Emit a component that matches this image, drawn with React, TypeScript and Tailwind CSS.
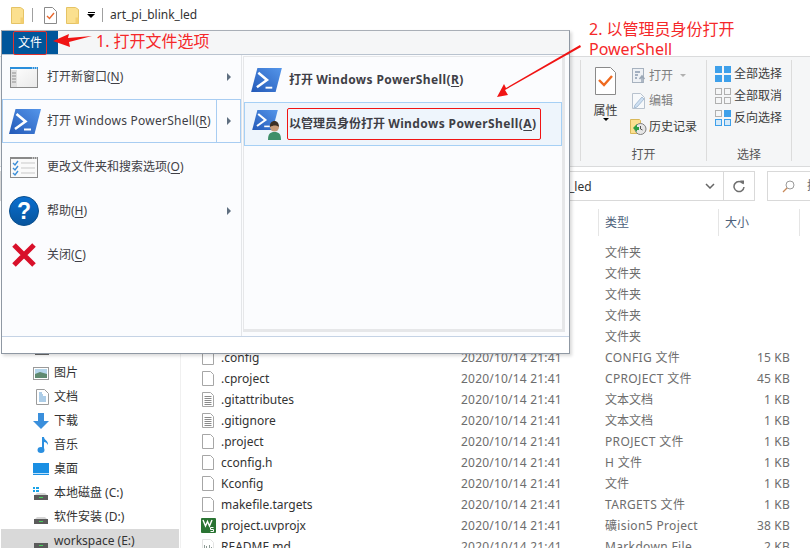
import type { ReactNode } from 'react';

const files = [
  { name: '', date: '', type: '文件夹', size: '' },
  { name: '', date: '', type: '文件夹', size: '' },
  { name: '', date: '', type: '文件夹', size: '' },
  { name: '', date: '', type: '文件夹', size: '' },
  { name: '', date: '', type: '文件夹', size: '' },
  { name: '.config', date: '2020/10/14 21:41', type: 'CONFIG 文件', size: '15 KB', icon: 'page' },
  { name: '.cproject', date: '2020/10/14 21:41', type: 'CPROJECT 文件', size: '45 KB', icon: 'page' },
  { name: '.gitattributes', date: '2020/10/14 21:41', type: '文本文档', size: '1 KB', icon: 'text' },
  { name: '.gitignore', date: '2020/10/14 21:41', type: '文本文档', size: '1 KB', icon: 'text' },
  { name: '.project', date: '2020/10/14 21:41', type: 'PROJECT 文件', size: '1 KB', icon: 'page' },
  { name: 'cconfig.h', date: '2020/10/14 21:41', type: 'H 文件', size: '1 KB', icon: 'page' },
  { name: 'Kconfig', date: '2020/10/14 21:41', type: '文件', size: '1 KB', icon: 'page' },
  { name: 'makefile.targets', date: '2020/10/14 21:41', type: 'TARGETS 文件', size: '1 KB', icon: 'page' },
  { name: 'project.uvprojx', date: '2020/10/14 21:41', type: '礦ision5 Project', size: '38 KB', icon: 'keil' },
  { name: 'README.md', date: '2020/10/14 21:41', type: 'Markdown File', size: '2 KB', icon: 'md' },
];

function FolderIcon() {
  return (
    <svg width="13" height="17" viewBox="0 0 13 17">
      <path d="M.5.5h9l3 2v14H.5z" fill="#fbe08f" stroke="#e5c365" />
      <path d="M9.5 10.5h3v6h-3z" fill="#f3cf70" />
    </svg>
  );
}

function PageIcon({ lines }: { lines?: boolean }) {
  return (
    <svg width="12" height="15" viewBox="0 0 12 15">
      <path d="M.5.5h8l3 3v11H.5z" fill="#fff" stroke="#a6a6a6" />
      {lines && <path d="M2.500 4.500h7M2.500 6.500h7M2.500 8.500h7M2.500 10.500h7M2.500 12.500h7" stroke="#8a8a8a" />}
    </svg>
  );
}

function KeilIcon() {
  return (
    <svg width="15" height="15" viewBox="0 0 15 15">
      <rect width="15" height="15" rx="1" fill="#2a7433" />
      <path d="M2 2l2.500 6 2-4.500L8.500 8 11 2" fill="none" stroke="#fff" strokeWidth="1.400" />
      <path d="M12.500 9.500h-3v2h3v2h-3" fill="none" stroke="#fff" />
    </svg>
  );
}

function FileIcon({ kind }: { kind?: string }) {
  if (kind === 'keil') return <KeilIcon />;
  if (kind === 'text') return <PageIcon lines />;
  if (kind === 'md') {
    return (
      <svg width="12" height="15" viewBox="0 0 12 15">
        <path d="M.5.500h8l3 3v11H.5z" fill="#fff" stroke="#e4e4e4" />
        <path d="M2 6h1v4H2zM4 7h1v3H4zM7 6h1v4H7zM9 8h1v2H9z" fill="#8d9a94" />
      </svg>
    );
  }
  return <PageIcon />;
}

function PowerShellIcon({ w = 32, h = 25, id }: { w?: number; h?: number; id: string }) {
  return (
    <svg width={w} height={h} viewBox="0 0 32 25">
      <defs>
        <linearGradient id={id} x1="0" y1="1" x2="1" y2="0">
          <stop offset="0" stopColor="#2359b8" />
          <stop offset="1" stopColor="#5596ea" />
        </linearGradient>
      </defs>
      <path d="M6.500 0H32l-6.500 25H0z" fill={`url(#${id})`} />
      <path d="M7.500 5l9 7.500L6 20" fill="none" stroke="#fff" strokeWidth="2.600" />
      <path d="M15 20.500h7" stroke="#fff" strokeWidth="2" />
    </svg>
  );
}

function WindowIcon() {
  return (
    <svg width="28" height="21" viewBox="0 0 28 21">
      <defs>
        <linearGradient id="win-bg" x1="0" y1="0" x2="1" y2="1">
          <stop offset="0" stopColor="#ffffff" />
          <stop offset="1" stopColor="#e9e9e9" />
        </linearGradient>
      </defs>
      <rect x=".5" y=".5" width="27" height="20" fill="url(#win-bg)" stroke="#8a8a8a" />
      <rect x="0" y="0" width="28" height="2" fill="#2a8fdc" />
      <path d="M22 1h1M24 1h1M26 1h1" stroke="#fff" />
      <rect x="1" y="3" width="6" height="17" fill="#e1e1e1" />
      <path d="M2 6h4M2 9h4M2 12h4M2 15h4" stroke="#8f8f8f" />
    </svg>
  );
}

function OptionsIcon() {
  return (
    <svg width="28" height="21" viewBox="0 0 28 21">
      <rect x=".5" y=".5" width="27" height="20" fill="#fafafa" stroke="#8a8a8a" />
      <rect x="0" y="0" width="28" height="2" fill="#8a8a8a" />
      <path d="M22 1h1M24 1h1M26 1h1" stroke="#fff" />
      <path d="M11 6h14M11 11h14M11 16h14" stroke="#c9c9c9" />
      <path d="M3 6l2 2 3-4M3 11l2 2 3-4M3 16l2 2 3-4" fill="none" stroke="#3d8fd8" strokeWidth="1.400" />
    </svg>
  );
}

function HelpIcon() {
  return (
    <svg width="30" height="30" viewBox="0 0 30 30">
      <defs>
        <linearGradient id="help-bg" x1="0" y1="0" x2="0" y2="1">
          <stop offset="0" stopColor="#0a6fd0" />
          <stop offset="1" stopColor="#07549c" />
        </linearGradient>
      </defs>
      <circle cx="15" cy="15" r="14.500" fill="url(#help-bg)" stroke="#0a4f8e" />
      <text x="15" y="23" textAnchor="middle" fontSize="23" fontWeight="700" fill="#fff" fontFamily="Liberation Sans, sans-serif">?</text>
    </svg>
  );
}

function CloseIcon() {
  return (
    <svg width="26" height="26" viewBox="0 0 26 26">
      <path d="M3 3l20 20M23 3L3 23" stroke="#d8102a" strokeWidth="5" />
    </svg>
  );
}

function Caret() {
  return <div className="h-0 w-0 border-y-[4px] border-l-[4px] border-y-transparent border-l-[#5f6f80]" />;
}

function Key({ children }: { children: ReactNode }) {
  return <span className="underline underline-offset-2">{children}</span>;
}

function MenuRow({ icon, label, arrow }: { icon: ReactNode; label: ReactNode; arrow?: boolean }) {
  return (
    <div className="flex h-[44px] items-center">
      <div className="flex w-[45px] shrink-0 justify-center pr-[1px]">{icon}</div>
      <div className="flex-1 text-[12px] text-[#3f3f46]">{label}</div>
      {arrow && <div className="mr-[10px]"><Caret /></div>}
    </div>
  );
}

function FileMenu() {
  return (
    <div className="absolute left-[1px] top-[30px] flex h-[324px] w-[569px] flex-col border border-[#8f98a3] border-t-[#a9afb7] bg-white shadow-[2px_2px_3px_rgba(0,0,0,0.15)]">
      <div className="flex h-[24px] shrink-0 border-b border-[#b9c3cf] bg-[#f5f6f7]">
        <div className="flex h-full w-[56px] items-center pl-[11px] bg-[#00569b] text-[12px] text-white">
          <span className="rounded-[2px] border border-[#e0322f] px-[4px] py-[2px]">文件</span>
        </div>
      </div>
      <div className="flex flex-1 border-b border-[#c5d3e5] bg-[#fbfcfe]">
        <div className="w-[240px] shrink-0 border-r border-[#e4e6e9]">
          <MenuRow icon={<WindowIcon />} arrow label={<>打开新窗口(<Key>N</Key>)</>} />
          <div className="flex h-[44px] items-center border border-[#a8cdf2]">
            <div className="flex w-[44px] shrink-0 justify-center"><PowerShellIcon id="ps-a" /></div>
            <div className="flex-1 text-[12px] text-[#3f3f46]">
              打开 <span className="tracking-[0.25px]">Windows PowerShell(<Key>R</Key>)</span>
            </div>
            <div className="flex h-full w-[24px] items-center justify-center border-l border-[#a8cdf2]"><Caret /></div>
          </div>
          <div className="h-[2px]" />
          <MenuRow icon={<OptionsIcon />} label={<>更改文件夹和搜索选项(<Key>O</Key>)</>} />
          <MenuRow icon={<HelpIcon />} arrow label={<>帮助(<Key>H</Key>)</>} />
          <MenuRow icon={<CloseIcon />} label={<>关闭(<Key>C</Key>)</>} />
        </div>
        <div className="mb-[4px] ml-[1px] mr-[4px] mt-[1px] flex-1 border-b-[3px] border-l border-r-[3px] border-t border-[#e6e7e9] pt-[1px]">
          <div className="flex h-[44px] items-center">
            <div className="ml-[7px] w-[38px]"><PowerShellIcon id="ps-b" w={31} h={24} /></div>
            <div className="text-[12px] font-bold text-[#3f3f46]">
              打开 <span className="tracking-[0.38px]">Windows PowerShell(<Key>R</Key>)</span>
            </div>
          </div>
          <div className="flex h-[44px] items-center border border-[#a6d0f5] bg-[#eef5fc]">
            <div className="relative mb-[8px] ml-[7px] h-[20px] w-[35px]">
              <PowerShellIcon id="ps-c" w={26} h={20} />
              <svg className="absolute left-[15px] top-[10px]" width="15" height="20" viewBox="0 0 15 20">
                <path d="M1 20c0-6 2-8 6.500-8S14 14 14 20z" fill="#3f8f69" />
                <circle cx="7.500" cy="7" r="4.500" fill="#c79a78" />
                <path d="M3 7c-.5-4 2-6 4.500-6S12 3 12 7c-2-2-6-2-9 0z" fill="#3c2e24" />
              </svg>
            </div>
            <div className="rounded-[2px] border border-[#f01414] py-[6px] pl-[1px] pr-[4px] text-[12px] font-bold text-[#3f3f46]">
              以管理员身份打开 <span className="tracking-[0.4px]">Windows PowerShell(<Key>A</Key>)</span>
            </div>
          </div>
        </div>
      </div>
      <div className="h-[16px] shrink-0" />
    </div>
  );
}

function Annotations() {
  return (
    <>
      <svg className="absolute left-0 top-0" width="810" height="110" viewBox="0 0 810 110">
        <path d="M53 41l16-7-1 4 24-2-23 6 1 5z" fill="#f01414" />
        <path d="M581 47L505 90l3 5-11 2 7-13 2 4 74-43z" fill="#f01414" />
      </svg>
      <div className="absolute left-[96px] top-[30px] text-[16px] leading-[22px] text-[#f5282a]">1. 打开文件选项</div>
      <div className="absolute left-[589px] top-[19px] text-[16px] leading-[20px] text-[#f5282a]">
        <div>2. 以管理员身份打开</div>
        <div>PowerShell</div>
      </div>
    </>
  );
}

function SmallBtn({ icon, label, dim }: { icon: ReactNode; label: ReactNode; dim?: boolean }) {
  return (
    <div className={`flex h-[25px] items-center gap-[2px] text-[12px] ${dim ? 'text-[#7f7f7f]' : 'text-[#3c3c3c]'}`}>
      <div className="flex w-[17px] justify-center">{icon}</div>
      {label}
    </div>
  );
}

function Grid4({ cells }: { cells: string[] }) {
  return (
    <div className="grid grid-cols-2 gap-[2px]">
      {cells.map((c, i) => (
        <div key={i} className={`h-[7px] w-[7px] ${c}`} />
      ))}
    </div>
  );
}

function Ribbon() {
  const filled = 'bg-[#3ea0ea]';
  const empty = 'border border-[#b0b0b0]';
  const light = 'border border-[#3ea0ea] bg-[#d4e9f9]';
  return (
    <div className="flex h-[111px] shrink-0 border-y border-[#dadbdc] bg-[#f5f6f7]">
      <div className="w-[580px] shrink-0" />
      <div className="my-[3px] flex h-[101px] w-[127px] shrink-0 flex-col border-x border-[#dcdcdc]">
        <div className="flex flex-1">
          <div className="flex w-[49px] flex-col items-center pt-[7px] text-[12px] text-[#3c3c3c]">
            <svg width="21" height="28" viewBox="0 0 21 28">
              <path d="M.5.5h15l5 5v22H.5z" fill="#fff" stroke="#8a8a8a" />
              <path d="M4 13l5 5 8-9" fill="none" stroke="#ef6a1f" strokeWidth="2.400" />
            </svg>
            <div className="mt-[8px] leading-[15px]">属性</div>
            <div className="h-0 w-0 border-x-[3px] border-t-[3px] border-x-transparent border-t-black" />
          </div>
          <div className="flex flex-col pt-[3px]">
            <SmallBtn
              dim
              label={
                <>
                  打开
                  <span className="ml-[5px] h-0 w-0 border-x-[3px] border-t-[3px] border-x-transparent border-t-[#b0b0b0]" />
                </>
              }
              icon={
                <svg width="14" height="15" viewBox="0 0 14 15">
                  <rect x=".5" y=".5" width="11" height="14" fill="#eef1f5" stroke="#a7b2bf" />
                  <path d="M3 4h5M3 7h3M3 10h2" stroke="#8b9bb0" strokeWidth="1.500" />
                  <path d="M10 15V9M7.500 11l2.500-3 2.500 3" fill="none" stroke="#9aa7b6" strokeWidth="1.500" />
                </svg>
              }
            />
            <SmallBtn
              dim
              label="编辑"
              icon={
                <svg width="14" height="16" viewBox="0 0 14 16">
                  <path d="M.5.500h8l4 4v11H.5z" fill="#f7f9fb" stroke="#b8c2ce" />
                  <path d="M3 12l7-8 2 2-7 8-3 1z" fill="#cfe0f2" stroke="#a9bfd6" />
                </svg>
              }
            />
            <div className="pt-[1px]">
              <SmallBtn
                label="历史记录"
                icon={
                  <svg width="17" height="16" viewBox="0 0 17 16">
                    <path d="M.5.500h9l1 1v13H.5z" fill="#fbe08f" stroke="#d9b85a" />
                    <circle cx="10.500" cy="10" r="5.500" fill="#e6e6e6" stroke="#7f7f7f" />
                    <path d="M10.500 7v3l2 1" fill="none" stroke="#555" />
                    <path d="M3 9l4-4v3h2v3H7v2z" fill="#2f9e44" />
                  </svg>
                }
              />
            </div>
          </div>
        </div>
        <div className="-mb-[2px] text-center text-[12px] leading-[16px] text-[#555]">打开</div>
      </div>
      <div className="my-[3px] flex h-[101px] w-[85px] shrink-0 flex-col border-r border-[#dcdcdc]">
        <div className="flex flex-1 flex-col pl-[8px] pt-[3px]">
          <div className="flex h-[22px] items-center gap-[3px] text-[12px] text-[#3c3c3c]">
            <Grid4 cells={[filled, filled, filled, filled]} />
            全部选择
          </div>
          <div className="flex h-[22px] items-center gap-[3px] text-[12px] text-[#3c3c3c]">
            <Grid4 cells={[empty, empty, empty, empty]} />
            全部取消
          </div>
          <div className="flex h-[22px] items-center gap-[3px] text-[12px] text-[#3c3c3c]">
            <Grid4 cells={[empty, filled, light, light]} />
            反向选择
          </div>
        </div>
        <div className="-mb-[2px] text-center text-[12px] leading-[16px] text-[#555]">选择</div>
      </div>
    </div>
  );
}

function AddressBar() {
  return (
    <div className="flex h-[38px] shrink-0 items-center">
      <div className="flex h-[30px] w-[755px] shrink-0 items-center border border-[#d9d9d9] pl-[568px] text-[12px] text-[#333]">
        <span className="flex-1 pt-[1px]">_led</span>
        <svg className="mr-[8px]" width="10" height="6" viewBox="0 0 10 6">
          <path d="M1 1l4 4 4-4" fill="none" stroke="#666" strokeWidth="1.500" />
        </svg>
        <div className="flex h-full w-[31px] items-center justify-center border-l border-[#d9d9d9]">
          <svg width="12" height="13" viewBox="0 0 12 13">
            <path d="M10 3.500A5 5 0 1 0 11 7" fill="none" stroke="#6f6f6f" strokeWidth="1.500" />
            <path d="M7 .5h4v4z" fill="#6f6f6f" />
          </svg>
        </div>
      </div>
      <div className="ml-[12px] flex h-[30px] min-w-0 flex-1 items-center overflow-hidden whitespace-nowrap border-y border-l border-[#d9d9d9] pl-[14px] text-[12px] text-[#6d6d6d]">
        <svg className="mr-[12px] shrink-0" width="13" height="13" viewBox="0 0 13 13">
          <circle cx="8" cy="5" r="4" fill="none" stroke="#9a9a9a" />
          <path d="M5 8l-4 4" stroke="#c98a5a" strokeWidth="1.300" />
        </svg>
        搜索
      </div>
    </div>
  );
}

function NavItem({ icon, label, active }: { icon: ReactNode; label: string; active?: boolean }) {
  return (
    <div className={`flex h-[24px] shrink-0 items-center ${active ? 'bg-[#d9d9d9]' : ''}`}>
      <div className="flex w-[53px] shrink-0 justify-end pr-[5px]">{icon}</div>
      <span className="text-[12px] text-[#333]">{label}</span>
    </div>
  );
}

function DriveIcon({ win }: { win?: boolean }) {
  return (
    <svg className="mt-[1px]" width="16" height="14" viewBox="0 0 16 14">
      {win && <path d="M0 0h2v2H0zM3 0h3v2H3zM0 3h2v2H0zM3 3h3v2H3z" fill="#1aa3e8" />}
      <path d="M2 8l2-2h8l2 2z" fill="#d6d6d6" />
      <rect x="1" y="8" width="14" height="5" fill="#5b5b5b" />
      <rect x="6" y="10" width="4" height="1" fill="#45d05a" />
    </svg>
  );
}

function Sidebar() {
  return (
    <div className="flex w-[181px] shrink-0 flex-col overflow-hidden border-r border-[#f0f0f0] pl-[1px] pr-[1px] pt-[132px]">
      <NavItem
        label="视频"
        icon={
          <svg width="14" height="11" viewBox="0 0 14 11">
            <rect width="14" height="11" fill="#d8d8d8" />
            <rect y="8" width="14" height="3" fill="#6a6a6a" />
            <path d="M2 9h1M5 9h1M8 9h1M11 9h1" stroke="#e8b83a" />
          </svg>
        }
      />
      <NavItem
        label="图片"
        icon={
          <svg width="16" height="13" viewBox="0 0 16 13">
            <rect x=".5" y=".5" width="15" height="12" fill="#fff" stroke="#9a9a9a" />
            <rect x="2" y="2" width="12" height="5" fill="#b4d5ea" />
            <path d="M2 7l5-2 7 2v4H2z" fill="#5f8a70" />
          </svg>
        }
      />
      <NavItem
        label="文档"
        icon={
          <svg width="13" height="16" viewBox="0 0 13 16">
            <path d="M.5.500h8l4 4v11H.5z" fill="#fff" stroke="#9c9c9c" />
            <path d="M3 4h3M3 6h4M3 8h7M3 10h7M3 12h7" stroke="#5a9bd0" />
          </svg>
        }
      />
      <NavItem
        label="下载"
        icon={
          <svg width="16" height="16" viewBox="0 0 16 16">
            <path d="M5 0h6v8h5l-8 8-8-8h5z" fill="#3a8fdc" />
          </svg>
        }
      />
      <NavItem
        label="音乐"
        icon={
          <svg width="12" height="16" viewBox="0 0 12 16">
            <ellipse cx="4" cy="13" rx="3.500" ry="3" fill="#2a8fe0" />
            <path d="M5 0h2c0 3 4.500 3.500 4 8-1-2-2.500-3-4-3v8H5z" fill="#2a8fe0" />
          </svg>
        }
      />
      <NavItem
        label="桌面"
        icon={
          <svg width="16" height="12" viewBox="0 0 16 12">
            <rect width="16" height="12" fill="#1a8fe3" />
            <rect y="10" width="16" height="1" fill="#bfe2fa" />
          </svg>
        }
      />
      <NavItem label="本地磁盘 (C:)" icon={<DriveIcon win />} />
      <NavItem label="软件安装 (D:)" icon={<DriveIcon />} />
      <NavItem label="workspace (E:)" icon={<DriveIcon />} active />
    </div>
  );
}

function FileList() {
  return (
    <div className="min-w-0 flex-1 overflow-hidden">
      <div className="flex h-[37px] pb-[6px] pt-[4px] text-[12px] text-[#4c607a]">
        <div className="w-[418px] shrink-0 border-r border-[#e5e5e5]" />
        <div className="flex w-[120px] shrink-0 items-center border-r border-[#e5e5e5] pl-[6px]">类型</div>
        <div className="flex w-[81px] shrink-0 items-center border-r border-[#e5e5e5] pl-[6px]">大小</div>
      </div>
      {files.map((f, i) => (
        <div key={i} className="flex h-[21px] items-center text-[12px] text-[#6d6d6d]">
          <div className="w-[18px] shrink-0" />
          <div className="flex w-[18px] shrink-0 justify-center">{f.name && <FileIcon kind={f.icon} />}</div>
          <div className="w-[244px] shrink-0 pl-[4px] text-[#333]">{f.name}</div>
          <div className="w-[144px] shrink-0 tracking-[0.2px]">{f.date}</div>
          <div className={`w-[120px] shrink-0 ${/[A-Z]/.test(f.type) ? 'tracking-[0.35px]' : ''}`}>{f.type}</div>
          <div className="w-[65px] shrink-0 text-right tracking-[0.2px]">{f.size}</div>
        </div>
      ))}
    </div>
  );
}

function TitleBar() {
  return (
    <div className="flex h-[30px] shrink-0 items-center pl-[11px] text-[12px] text-[#333]">
      <FolderIcon />
      <div className="mx-[8px] h-[14px] w-px bg-[#a0a0a0]" />
      <svg className="ml-[3px]" width="13" height="17" viewBox="0 0 13 17">
        <path d="M.5.500h8l4 4v12H.5z" fill="#fff" stroke="#8a8a8a" />
        <path d="M3 9l2.500 2.500L10 6" fill="none" stroke="#e9662c" strokeWidth="1.400" />
      </svg>
      <div className="ml-[9px]"><FolderIcon /></div>
      <div className="ml-[8px] flex flex-col items-center gap-[1px]">
        <div className="h-px w-[7px] bg-black" />
        <div className="h-0 w-0 border-x-[4px] border-t-[4px] border-x-transparent border-t-black" />
      </div>
      <div className="mx-[7px] h-[14px] w-px bg-[#a0a0a0]" />
      <span>art_pi_blink_led</span>
    </div>
  );
}

export default function App() {
  return (
    <div
      className="relative flex h-[548px] w-[810px] flex-col overflow-hidden bg-white"
      style={{ fontFamily: '"Noto Sans", "Noto Sans CJK SC", sans-serif' }}
    >
      <TitleBar />
      <div className="h-[26px] shrink-0" />
      <Ribbon />
      <AddressBar />
      <div className="flex min-h-0 flex-1">
        <Sidebar />
        <FileList />
      </div>
      <FileMenu />
      <Annotations />
    </div>
  );
}
